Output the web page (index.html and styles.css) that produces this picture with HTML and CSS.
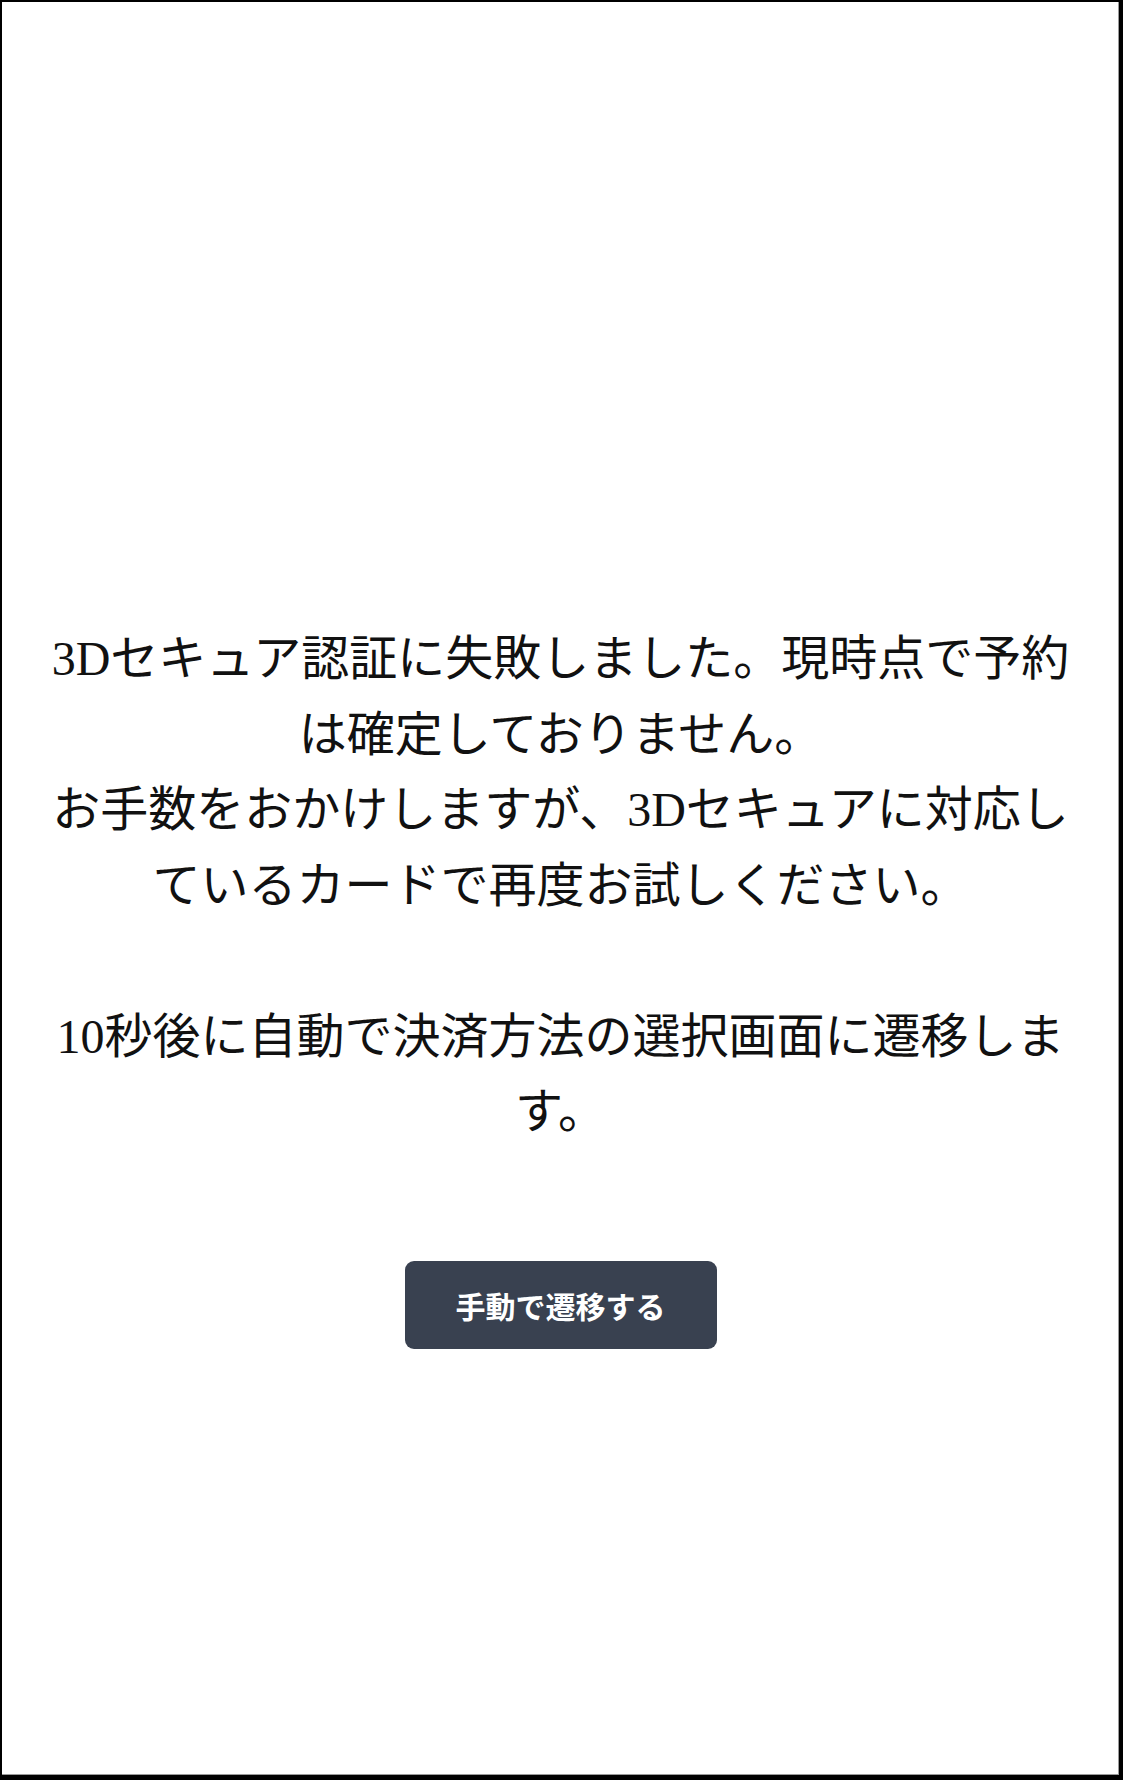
FILE: index.html
```html
<!DOCTYPE html>
<html lang="ja">
<head>
    <meta charset="UTF-8">
    <meta name="viewport" content="width=device-width, initial-scale=1">
    <title>3Dセキュア認証エラー</title>
    <link rel="stylesheet" href="styles.css">
</head>
<body>

<div class="frame">
    <!-- エラーメッセージ -->
    <div class="message">
        <p class="message-text">
            3Dセキュア認証に失敗しました。現時点で予約は確定しておりません。<br>
            お手数をおかけしますが、3Dセキュアに対応しているカードで再度お試しください。<br>
            <br>
            10秒後に自動で決済方法の選択画面に遷移します。
        </p>
    </div>

    <!-- 手動遷移ボタン -->
    <div class="actions">
        <button class="btn" type="button">手動で遷移する</button>
    </div>
</div>

</body>
</html>
```

FILE: styles.css
```css
html, body {
    margin: 0;
    padding: 0;
    height: 100%;
}

body {
    background: #000;
    font-family: 'Liberation Serif', 'Noto Sans CJK JP', serif;
    color: #111;
}

.frame {
    box-sizing: border-box;
    height: 100vh;
    background: #fff;
    border-style: solid;
    border-color: #000;
    border-width: 2px 4px 5px 2px;
    box-shadow: inset -1px -1px 0 #9a9a9a;
    padding: 619px 30px 0;
    text-align: center;
}

.message-text {
    margin: 0;
    font-size: 48px;
    line-height: 75.5px; /* 行間 */
}

.actions {
    margin-top: 111px;
}

.btn {
    display: inline-flex;
    align-items: center;
    justify-content: center;
    height: 88px;
    padding: 0 51px;
    background: #394150;
    color: #fff;
    border: none;
    border-radius: 9px;
    font-family: 'Noto Sans CJK JP', sans-serif;
    font-size: 30px;
    font-weight: bold;
    cursor: pointer;
}

.btn:hover {
    background: #2c323e;
}
```
